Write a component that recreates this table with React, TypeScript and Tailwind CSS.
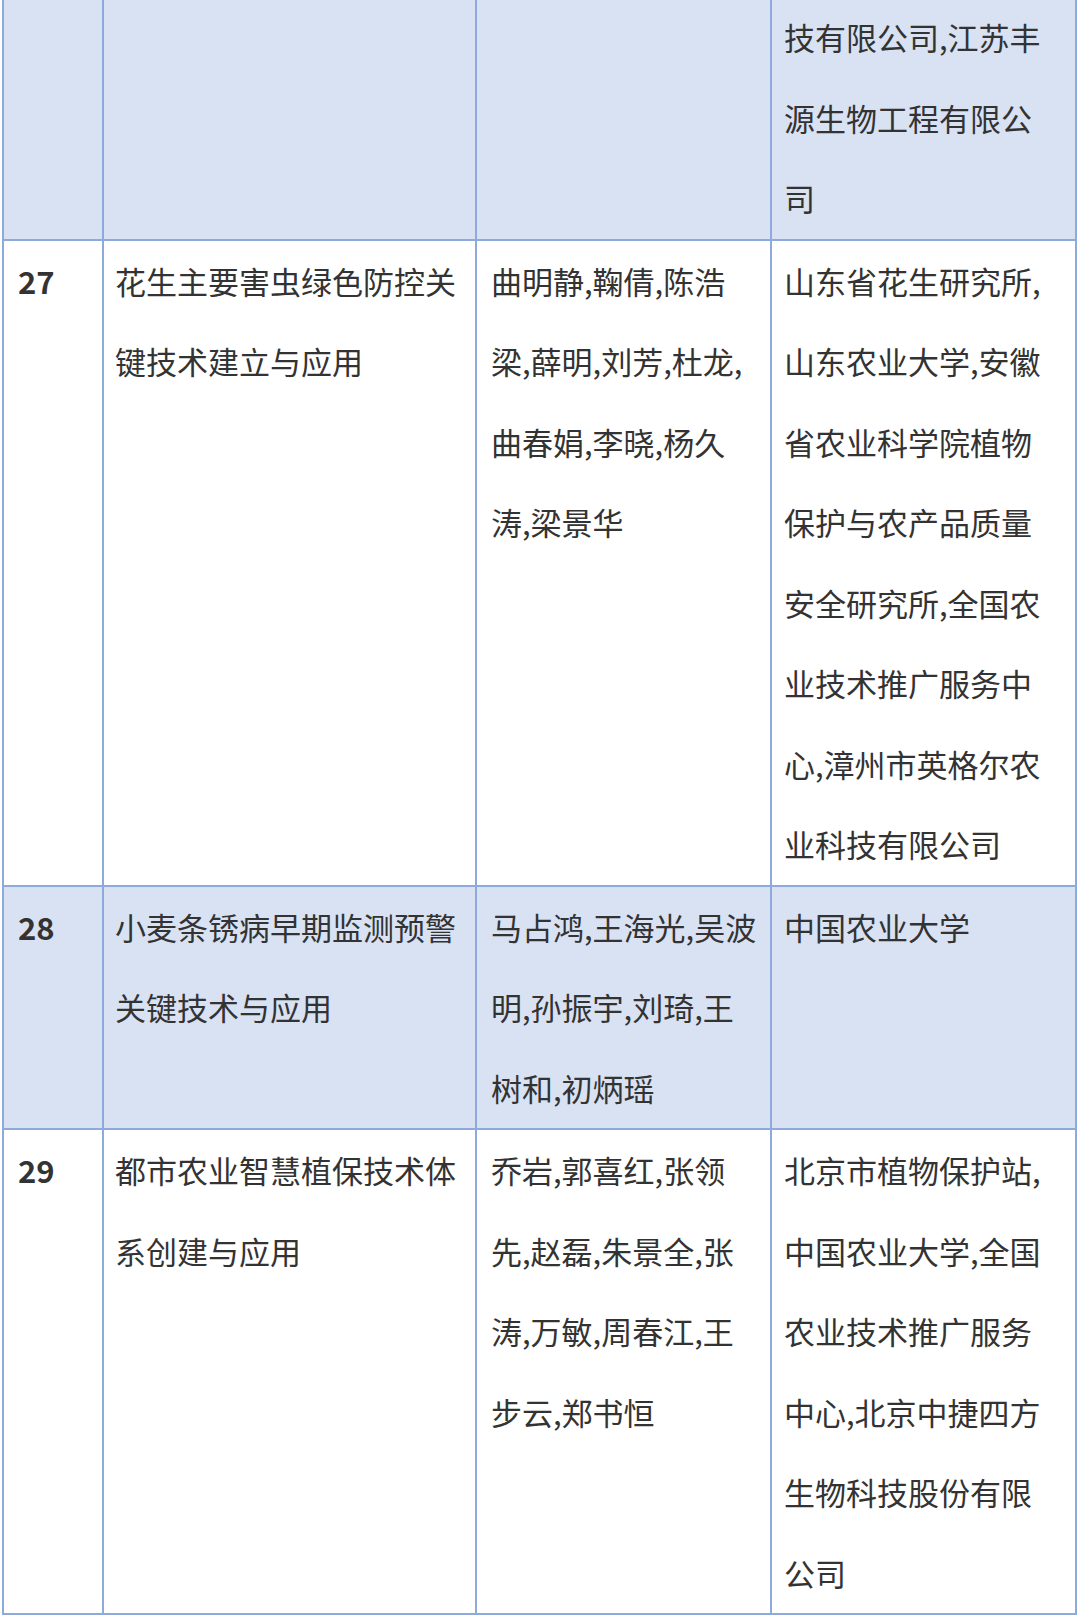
import React from "react";

type Row = {
  no: string;
  title: string[];
  people: string[];
  orgs: string[];
  shaded: boolean;
};

const rows: Row[] = [
  {
    no: "",
    title: [],
    people: [],
    orgs: ["技有限公司,江苏丰", "源生物工程有限公", "司"],
    shaded: true,
  },
  {
    no: "27",
    title: ["花生主要害虫绿色防控关", "键技术建立与应用"],
    people: ["曲明静,鞠倩,陈浩", "梁,薛明,刘芳,杜龙,", "曲春娟,李晓,杨久", "涛,梁景华"],
    orgs: [
      "山东省花生研究所,",
      "山东农业大学,安徽",
      "省农业科学院植物",
      "保护与农产品质量",
      "安全研究所,全国农",
      "业技术推广服务中",
      "心,漳州市英格尔农",
      "业科技有限公司",
    ],
    shaded: false,
  },
  {
    no: "28",
    title: ["小麦条锈病早期监测预警", "关键技术与应用"],
    people: ["马占鸿,王海光,吴波", "明,孙振宇,刘琦,王", "树和,初炳瑶"],
    orgs: ["中国农业大学"],
    shaded: true,
  },
  {
    no: "29",
    title: ["都市农业智慧植保技术体", "系创建与应用"],
    people: ["乔岩,郭喜红,张领", "先,赵磊,朱景全,张", "涛,万敏,周春江,王", "步云,郑书恒"],
    orgs: [
      "北京市植物保护站,",
      "中国农业大学,全国",
      "农业技术推广服务",
      "中心,北京中捷四方",
      "生物科技股份有限",
      "公司",
    ],
    shaded: false,
  },
];

function Lines({ lines }: { lines: string[] }) {
  return (
    <>
      {lines.map((l, i) => (
        <div key={i} className="whitespace-nowrap">
          {l}
        </div>
      ))}
    </>
  );
}

export default function App() {
  return (
    <div
      className="w-[1080px] h-[1616px] bg-white overflow-hidden"
      style={{ fontFamily: '"Noto Sans CJK SC", "Noto Sans", sans-serif' }}
    >
      <table className="ml-[2px] -mt-[5px] w-[1075px] table-fixed border-collapse text-[31px] leading-[80.5px] text-[#333333]">
        <colgroup>
          <col className="w-[100px]" />
          <col className="w-[373px]" />
          <col className="w-[295px]" />
          <col className="w-[305px]" />
        </colgroup>
        <tbody>
          {rows.map((r, i) => {
            const bg = r.shaded ? "bg-[#d9e2f3]" : "bg-white";
            const cell = `border-2 border-[#8eaadb] align-top p-0 ${bg}`;
            return (
              <tr key={i}>
                <td className={`${cell} pl-[14px] font-bold`}>{r.no}</td>
                <td className={`${cell} pl-[11px]`}>
                  <Lines lines={r.title} />
                </td>
                <td className={`${cell} pl-[14px]`}>
                  <Lines lines={r.people} />
                </td>
                <td className={`${cell} pl-[12px]`}>
                  <Lines lines={r.orgs} />
                </td>
              </tr>
            );
          })}
        </tbody>
      </table>
    </div>
  );
}
